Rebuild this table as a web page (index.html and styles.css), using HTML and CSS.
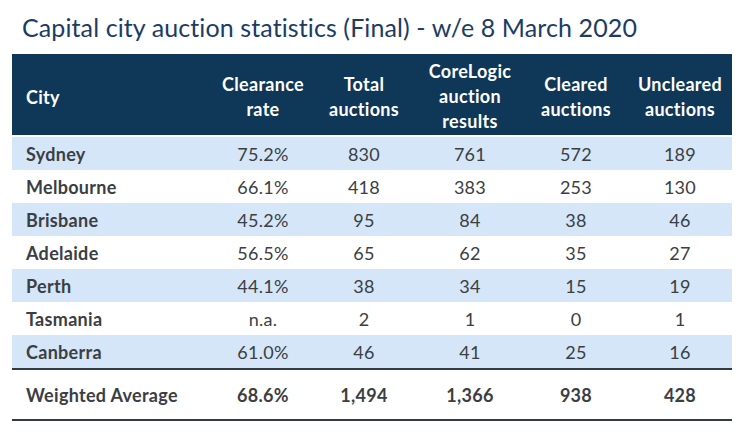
FILE: index.html
```html
<!DOCTYPE html>
<html lang="en">
<head>
<meta charset="utf-8">
<title>Capital city auction statistics</title>
<link rel="stylesheet" href="styles.css">
</head>
<body>
<div class="page">
  <h1 class="title">Capital city auction statistics (Final) - w/e 8 March 2020</h1>
  <table class="stats">
    <colgroup>
      <col class="c-city">
      <col class="c1">
      <col class="c2">
      <col class="c3">
      <col class="c4">
      <col class="c5">
    </colgroup>
    <thead>
      <tr>
        <th class="city">City</th>
        <th>Clearance<br>rate</th>
        <th>Total<br>auctions</th>
        <th>CoreLogic<br>auction<br>results</th>
        <th>Cleared<br>auctions</th>
        <th>Uncleared<br>auctions</th>
      </tr>
    </thead>
    <tbody>
      <tr class="alt"><td class="city">Sydney</td><td>75.2%</td><td>830</td><td>761</td><td>572</td><td>189</td></tr>
      <tr><td class="city">Melbourne</td><td>66.1%</td><td>418</td><td>383</td><td>253</td><td>130</td></tr>
      <tr class="alt"><td class="city">Brisbane</td><td>45.2%</td><td>95</td><td>84</td><td>38</td><td>46</td></tr>
      <tr><td class="city">Adelaide</td><td>56.5%</td><td>65</td><td>62</td><td>35</td><td>27</td></tr>
      <tr class="alt"><td class="city">Perth</td><td>44.1%</td><td>38</td><td>34</td><td>15</td><td>19</td></tr>
      <tr><td class="city">Tasmania</td><td>n.a.</td><td>2</td><td>1</td><td>0</td><td>1</td></tr>
      <tr class="alt"><td class="city">Canberra</td><td>61.0%</td><td>46</td><td>41</td><td>25</td><td>16</td></tr>
    </tbody>
    <tfoot>
      <tr class="total"><td class="city">Weighted Average</td><td>68.6%</td><td>1,494</td><td>1,366</td><td>938</td><td>428</td></tr>
    </tfoot>
  </table>
</div>
</body>
</html>
```

FILE: styles.css
```css
html, body {
  margin: 0;
  padding: 0;
  background: #ffffff;
}

body {
  font-family: Lato, "Open Sans", sans-serif;
  color: #3b3e43;
}

.page {
  padding: 12px 13px 0 12px;
}

.title {
  margin: 0 0 11px 10px;
  font-size: 25px;
  line-height: 31px;
  font-weight: 400;
  letter-spacing: 0.1px;
  color: #1c3c64;
  white-space: nowrap;
}

.stats {
  width: 720px;
  border-collapse: separate;
  border-spacing: 0;
  table-layout: fixed;
  font-size: 18px;
  letter-spacing: 0.3px;
}

.c-city { width: 202px; }
.c1 { width: 98px; }
.c2 { width: 104px; }
.c3 { width: 108px; }
.c4 { width: 104px; }
.c5 { width: 104px; }

.stats th,
.stats td {
  box-sizing: border-box;
  padding: 0;
  text-align: center;
  vertical-align: middle;
}

.stats th {
  background: #0e3758;
  color: #ffffff;
  font-weight: 700;
  line-height: 25px;
  height: 83px;
  padding-top: 4px;
  border-bottom: 2px solid #ffffff;
}

.stats td {
  height: 33px;
  line-height: 20px;
}

.stats .city {
  text-align: left;
  padding-left: 14px;
  font-weight: 700;
}

.stats th.city {
  padding-top: 5px;
}

.stats tr.alt td {
  background: #d4e6f7;
}

.stats tr.total td {
  height: 53px;
  font-weight: 700;
  border-top: 2px solid #353b43;
  border-bottom: 2px solid #353b43;
}
```
